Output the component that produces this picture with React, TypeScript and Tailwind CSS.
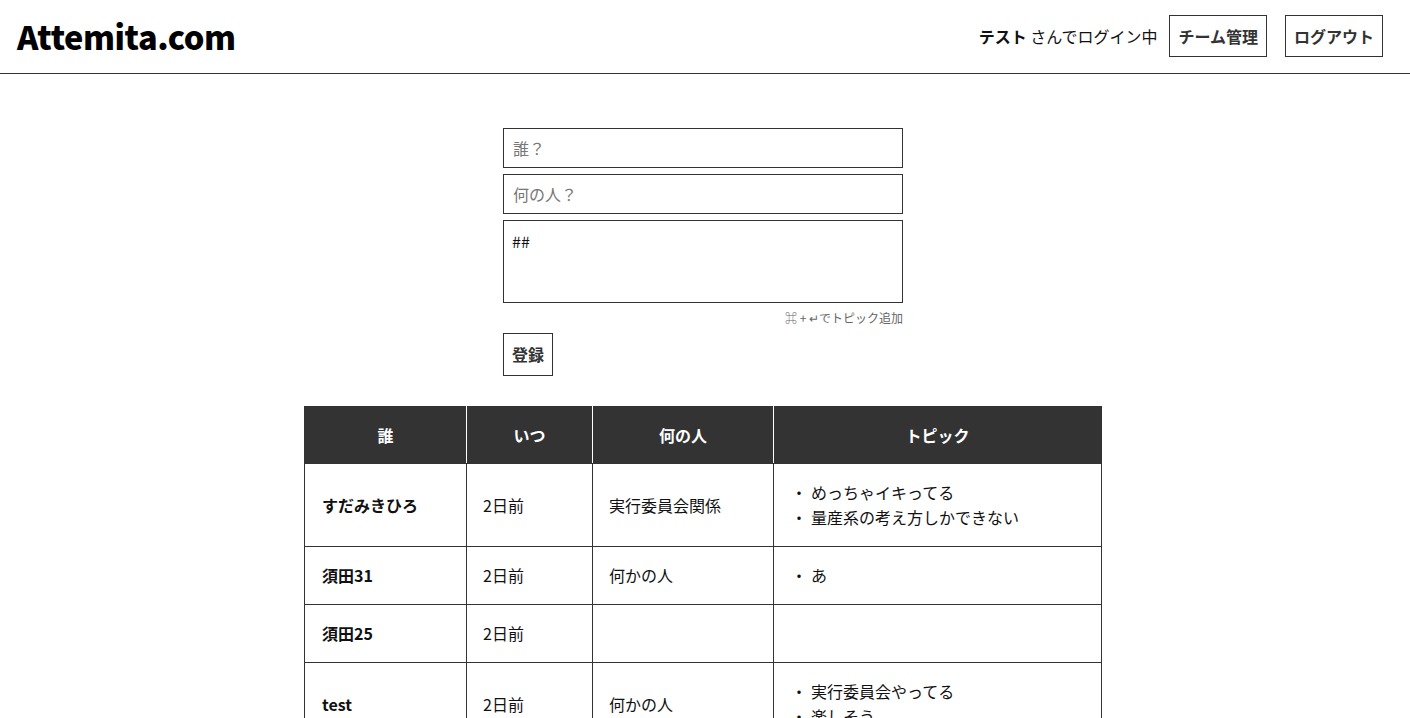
import React from "react";

type Entry = {
  who: string;
  when: string;
  what: string;
  topics: string[];
};

const entries: Entry[] = [
  { who: "すだみきひろ", when: "2日前", what: "実行委員会関係", topics: ["めっちゃイキってる", "量産系の考え方しかできない"] },
  { who: "須田31", when: "2日前", what: "何かの人", topics: ["あ"] },
  { who: "須田25", when: "2日前", what: "", topics: [] },
  { who: "test", when: "2日前", what: "何かの人", topics: ["実行委員会やってる", "楽しそう"] },
];

const font = { fontFamily: '"Noto Sans CJK JP", "Noto Sans", sans-serif' };

export default function App() {
  return (
    <div className="min-h-screen bg-white text-[#111] text-[16px] leading-[25px]" style={font}>
      <header className="flex items-center justify-between h-[74px] border-b border-[#333] pl-[17px] pr-[27px]">
        <h1 className="text-[32.5px] font-black leading-none tracking-[-0.4px] text-black">Attemita.com</h1>
        <nav className="flex items-center -mt-[1px]">
          <span className="mr-3">
            <span className="font-bold">テスト</span> さんでログイン中
          </span>
          <button type="button" className="border border-[#333] px-[8px] py-2 font-bold leading-[24px] text-[#333]">
            チーム管理
          </button>
          <button type="button" className="ml-[18px] border border-[#333] px-[8px] py-2 font-bold leading-[24px] text-[#333]">
            ログアウト
          </button>
        </nav>
      </header>

      <main className="flex flex-col items-center pt-[54px]">
        <form className="w-[400px] flex flex-col mr-[4px]">
          <input
            placeholder="誰？"
            className="h-[40px] border border-[#333] px-[9px] outline-none placeholder:text-[#777]"
          />
          <input
            placeholder="何の人？"
            className="mt-[6px] h-[40px] border border-[#333] px-[9px] outline-none placeholder:text-[#777]"
          />
          <textarea
            defaultValue="##"
            className="mt-[6px] h-[83px] resize-none border border-[#333] px-[8px] pt-[8px] outline-none text-[16px]"
          />
          <p className="mt-[5px] text-right text-[12px] leading-[20px] text-[#666]">
            ⌘&nbsp;+&nbsp;↵でトピック追加
          </p>
          <div className="mt-[5px]">
            <button type="button" className="border border-[#333] px-2 py-[8px] font-bold leading-[25px] text-[#333]">
              登録
            </button>
          </div>
        </form>

        <table className="mt-[30px] w-[798px] border-collapse mr-[4px]">
          <thead>
            <tr className="bg-[#333] text-white">
              <th className="w-[162px] border border-[#333] border-r-white pt-4 pb-[15px] px-4 font-bold">誰</th>
              <th className="w-[126px] border border-[#333] border-r-white pt-4 pb-[15px] px-4 font-bold">いつ</th>
              <th className="w-[181px] border border-[#333] border-r-white pt-4 pb-[15px] px-4 font-bold">何の人</th>
              <th className="border border-[#333] pt-4 pb-[15px] px-4 font-bold">トピック</th>
            </tr>
          </thead>
          <tbody>
            {entries.map((e) => (
              <tr key={e.who}>
                <td className="border border-[#333] py-4 pl-[17px] pr-4 font-bold">{e.who}</td>
                <td className="border border-[#333] p-4">{e.when}</td>
                <td className="border border-[#333] p-4">{e.what}</td>
                <td className="border border-[#333] py-4 pl-[17px] pr-4">
                  {e.topics.length > 0 && (
                    <ul>
                      {e.topics.map((t) => (
                        <li key={t} className="flex">
                          <span className="w-[20px]">・</span>
                          <span>{t}</span>
                        </li>
                      ))}
                    </ul>
                  )}
                </td>
              </tr>
            ))}
          </tbody>
        </table>
      </main>
    </div>
  );
}
